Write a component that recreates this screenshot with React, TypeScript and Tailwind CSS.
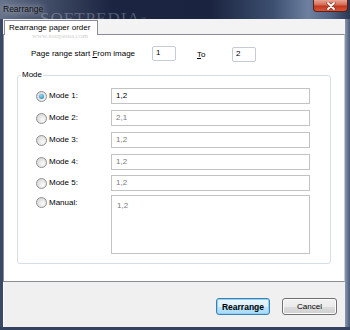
import React from 'react';

const modes = [
  { label: 'Mode 1:', value: '1,2', active: true, gap: '' },
  { label: 'Mode 2:', value: '2,1', active: false, gap: 'mt-[6px]' },
  { label: 'Mode 3:', value: '1,2', active: false, gap: 'mt-[6px]' },
  { label: 'Mode 4:', value: '1,2', active: false, gap: 'mt-[6px]' },
  { label: 'Mode 5:', value: '1,2', active: false, gap: 'mt-[5px]' },
];

function Radio({ checked }: { checked?: boolean }) {
  return (
    <span className="w-[11px] h-[11px] rounded-full border border-[#8e8f8f] bg-[radial-gradient(circle_at_65%_65%,#fbfbfb,#cfcfcf)] flex items-center justify-center shrink-0">
      {checked && (
        <span className="w-[5px] h-[5px] rounded-full bg-[radial-gradient(circle_at_40%_35%,#8ee0ff,#1a6aa0)]" />
      )}
    </span>
  );
}

export default function App() {
  return (
    <div className="relative w-[350px] h-[330px] overflow-hidden bg-[#2f3b58] [font-family:'Liberation_Sans',Arial,sans-serif] text-[8px] text-black leading-[10px]">
      {/* title bar */}
      <div className="h-[19px] flex items-start justify-between bg-[linear-gradient(90deg,#66728a_0%,#404b66_14%,#1b2541_32%,#1a2440_60%,#3d4f70_78%,#6d80a0_88%,#53668a_94%,#2b3652_100%)]">
        <span className="ml-[3px] mt-[4px] text-[8.5px] text-[#111] [text-shadow:0_0_6px_rgba(255,255,255,0.9)]">Rearrange</span>
        <div className="mr-[2px] w-[35px] h-[12px] rounded-b-[4px] border border-t-0 border-[#5a1f16] bg-[linear-gradient(180deg,#e9a595_0%,#d46a52_45%,#c0391f_55%,#d8553a_100%)] flex items-center justify-center">
          <svg width="10" height="8" viewBox="0 0 10 8">
            <path d="M2 1 L8 7 M8 1 L2 7" stroke="#6a2a1e" strokeWidth="3" strokeLinecap="round" />
            <path d="M2 1 L8 7 M8 1 L2 7" stroke="#ffffff" strokeWidth="1.8" strokeLinecap="round" />
          </svg>
        </div>
      </div>

      <div className="flex h-[308px]">
        <div className="w-[3px] bg-[#3b4868]" />
        <div className="w-[342px] flex flex-col bg-[#f0f0f0]">
          {/* tab strip */}
          <div className="h-[15px] bg-[#f3f3f3] flex items-end relative">
            <div className="ml-[1px] w-[94px] h-[15px] bg-white border border-b-0 border-[#898c95] relative z-10 -mb-[1px] flex items-center pl-[4px]">
              Rearrange paper order
            </div>
          </div>

          {/* tab panel */}
          <div className="h-[248px] bg-white border border-[#898c95] border-r-[#c9ccd2] flex flex-col">
            <div className="mt-[10px] pl-[27px] flex items-center">
              <span className="w-[121px]">
                Page range start <span className="underline">F</span>rom image
              </span>
              <div className="w-[24px] h-[15px] border border-[#c5ccd5] rounded-[2px] pl-[3px] pt-[1px]">1</div>
              <span className="ml-[21px] w-[35px] mt-[3px]">
                <span className="underline">T</span>o
              </span>
              <div className="w-[24px] h-[15px] mt-[2px] border border-[#c5ccd5] rounded-[2px] pl-[3px] pt-[1px]">2</div>
            </div>

            <fieldset className="mt-[8px] ml-[13px] w-[314px] border border-[#d5dfe5] rounded-[3px] pb-[9px]">
              <legend className="ml-[3px] px-[1px] leading-[10px]">Mode</legend>
              <div className="pt-[8px] pl-[18px] flex flex-col">
                {modes.map((m) => (
                  <div key={m.label} className={`flex items-center ${m.gap}`}>
                    <div className="w-[75px] flex items-center gap-[1px]">
                      <Radio checked={m.active} />
                      <span className="ml-[1px]">{m.label}</span>
                    </div>
                    <div
                      className={`w-[199px] h-[16px] border border-[#c3c3c3] flex items-center pl-[4px] ${
                        m.active ? 'text-black' : 'text-[#7a7a7a]'
                      }`}
                    >
                      {m.value}
                    </div>
                  </div>
                ))}
                <div className="flex items-start mt-[4px]">
                  <div className="w-[75px] flex items-center gap-[1px] mt-[2px]">
                    <Radio />
                    <span className="ml-[1px]">Manual:</span>
                  </div>
                  <div className="w-[199px] h-[59px] border border-[#c3c3c3] pl-[5px] pt-[5px] text-[#7a7a7a]">1,2</div>
                </div>
              </div>
            </fieldset>
          </div>

          {/* buttons */}
          <div className="h-[45px] flex justify-end items-start pt-[16px] pr-[8px] gap-[12px] border-l border-white">
            <button className="w-[54px] h-[17px] rounded-[3px] border border-[#3c7fb1] shadow-[inset_0_0_0_1px_#8fd3f5] bg-[linear-gradient(180deg,#eaf6fd_0%,#d9f0fc_50%,#bee6fd_51%,#a7d9f5_100%)] font-bold text-[8.5px] leading-[10px]">
              Rearrange
            </button>
            <button className="w-[55px] h-[17px] rounded-[3px] border border-[#707070] shadow-[inset_0_0_0_1px_#fcfcfc] bg-[linear-gradient(180deg,#f2f2f2_0%,#ebebeb_50%,#dddddd_51%,#cfcfcf_100%)] text-[8px] leading-[10px]">
              Cancel
            </button>
          </div>
        </div>
        <div className="w-[5px] bg-[linear-gradient(90deg,#8a97ac,#4a5a7a)]" />
      </div>
      <div className="h-[3px] bg-[#34415f]" />

      {/* watermark */}
      <div className="absolute left-[40px] top-[9px] text-[17px] leading-[20px] tracking-[1px] [font-family:'Liberation_Serif',serif] text-white/25 pointer-events-none">
        SOFTPEDIA<span className="text-[5px] align-top">™</span>
      </div>
      <div className="absolute left-[32px] top-[32px] text-[7px] leading-[8px] [font-family:'Liberation_Serif',serif] text-[#cfcfcf] pointer-events-none">
        www.softpedia.com
      </div>
    </div>
  );
}
